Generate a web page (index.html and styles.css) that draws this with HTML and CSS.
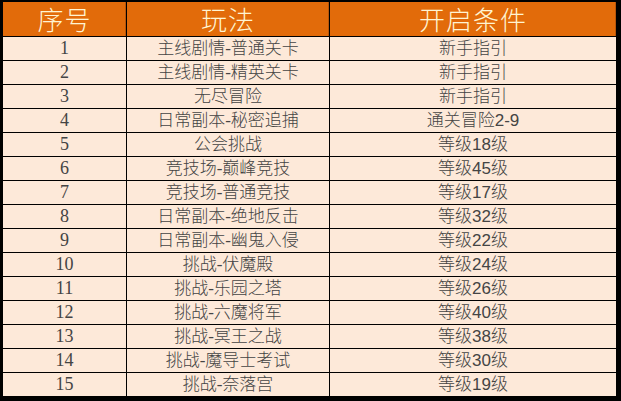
FILE: index.html
```html
<!DOCTYPE html>
<html lang="zh">
<head>
<meta charset="utf-8">
<link rel="stylesheet" href="styles.css">
</head>
<body>
<div class="frame">
  <div class="grid">
    <div class="hd">序号</div><div class="hd">玩法</div><div class="hd">开启条件</div>
    <div class="c n">1</div><div class="c m">主线剧情-普通关卡</div><div class="c r">新手指引</div>
    <div class="c n">2</div><div class="c m">主线剧情-精英关卡</div><div class="c r">新手指引</div>
    <div class="c n">3</div><div class="c m">无尽冒险</div><div class="c r">新手指引</div>
    <div class="c n">4</div><div class="c m">日常副本-秘密追捕</div><div class="c r">通关冒险2-9</div>
    <div class="c n">5</div><div class="c m">公会挑战</div><div class="c r">等级18级</div>
    <div class="c n">6</div><div class="c m">竞技场-巅峰竞技</div><div class="c r">等级45级</div>
    <div class="c n">7</div><div class="c m">竞技场-普通竞技</div><div class="c r">等级17级</div>
    <div class="c n">8</div><div class="c m">日常副本-绝地反击</div><div class="c r">等级32级</div>
    <div class="c n">9</div><div class="c m">日常副本-幽鬼入侵</div><div class="c r">等级22级</div>
    <div class="c n">10</div><div class="c m">挑战-伏魔殿</div><div class="c r">等级24级</div>
    <div class="c n">11</div><div class="c m">挑战-乐园之塔</div><div class="c r">等级26级</div>
    <div class="c n">12</div><div class="c m">挑战-六魔将军</div><div class="c r">等级40级</div>
    <div class="c n">13</div><div class="c m">挑战-冥王之战</div><div class="c r">等级38级</div>
    <div class="c n">14</div><div class="c m">挑战-魔导士考试</div><div class="c r">等级30级</div>
    <div class="c n">15</div><div class="c m">挑战-奈落宫</div><div class="c r">等级19级</div>
  </div>
</div>
</body>
</html>
```
FILE: styles.css
```css
html, body {
  margin: 0;
  padding: 0;
  background: #000;
}
.frame {
  width: 621px;
  height: 401px;
  box-sizing: border-box;
  padding: 2px 5px 4px 3px;
  background: #000;
}
.grid {
  display: grid;
  grid-template-columns: 123px 202px 286px;
  grid-template-rows: 34px repeat(15, 23px);
  gap: 1px;
  background: #000;
}
.hd {
  background: #e26b0a;
  color: #fff4d2;
  font-family: "Noto Sans CJK SC", sans-serif;
  font-weight: 300;
  font-size: 26px;
  line-height: 34px;
  text-align: center;
  letter-spacing: 1px;
  box-shadow: inset -1px 0 0 #b8560a;
}
.c {
  background: #fde9d9;
  color: #444;
  font-size: 17px;
  font-weight: 300;
  line-height: 23px;
  text-align: center;
  white-space: nowrap;
}
.n {
  font-family: "Liberation Serif", "Noto Sans CJK SC", serif;
  font-size: 18px;
}
.m {
  font-family: "Liberation Serif", "Noto Sans CJK SC", serif;
}
.r {
  font-family: "Liberation Sans", "Noto Sans CJK SC", sans-serif;
}
```
